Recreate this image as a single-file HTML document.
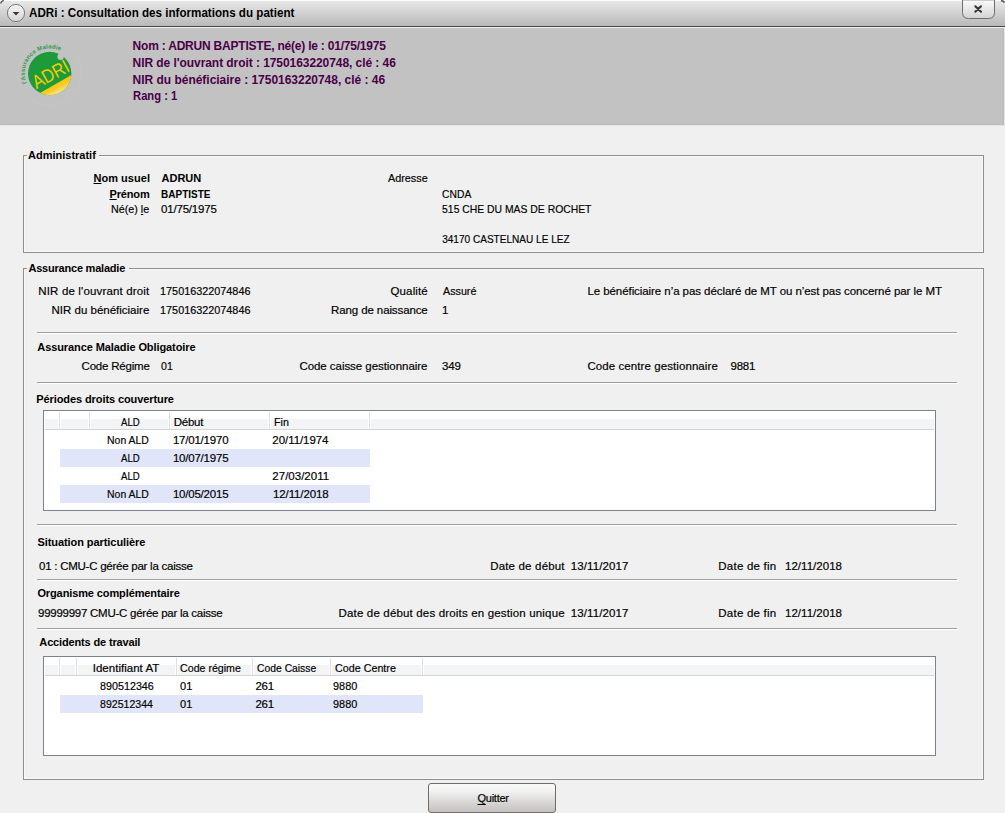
<!DOCTYPE html>
<html><head><meta charset="utf-8">
<style>
html,body{margin:0;padding:0;}
body{width:1005px;height:813px;overflow:hidden;position:relative;background:#f0f0f0;font-family:"Liberation Sans",sans-serif;}
.a{position:absolute;}
.t{position:absolute;white-space:pre;line-height:20px;font-family:"Liberation Sans",sans-serif;}
.r{-webkit-text-stroke:0.18px currentColor;}
.t u{text-decoration:underline;text-underline-offset:1px;}
.q u{text-underline-offset:2px;}
#title{position:absolute;left:0;top:0;width:1005px;height:27px;background:linear-gradient(#fbfbfb 0,#fbfbfb 1px,#e9e9ec 1px,#e6e6e6 2px,#b9b9b9 26px,#474747 26px,#474747 27px);}
#titlew{position:absolute;left:0;top:27px;width:1005px;height:1px;background:#f0f0f0;}
#hdr{position:absolute;left:0;top:28px;width:1004px;height:97px;background:#c2c2c2;box-shadow:inset -1px -1px 0 #bcbcbc, 1px 1px 1px rgba(0,0,0,0.04);}
#quit{position:absolute;left:428px;top:783px;width:126px;height:28px;border:1px solid #6f6b68;border-radius:3px;background:linear-gradient(#fafafa 0,#f0f0f0 30%,#dcdad9 60%,#c4c1bf 100%);box-sizing:content-box;}
</style></head><body>
<div id="title"></div>
<div id="titlew"></div>
<div id="hdr"></div>
<svg class="a" style="left:0;top:0" width="1005" height="28" viewBox="0 0 1005 28">
  <defs><linearGradient id="cbt" x1="0" y1="0" x2="0" y2="1"><stop offset="0" stop-color="#f4f4f4"/><stop offset="1" stop-color="#d6d6d6"/></linearGradient></defs>
  <circle cx="16" cy="13" r="8.6" fill="url(#cbt)" stroke="#7a7a7a" stroke-width="1"/>
  <path d="M12.6 12 L19.4 12 L16 15.6 Z" fill="#3a3a3a"/>
  <defs><linearGradient id="cbg" x1="0" y1="0" x2="0" y2="1"><stop offset="0" stop-color="#fbfbfb"/><stop offset="1" stop-color="#d2d2d2"/></linearGradient></defs>
  <path d="M962.5 0 L962.5 12.5 Q962.5 18.5 968.5 18.5 L988.5 18.5 Q994.5 18.5 994.5 12.5 L994.5 0" fill="url(#cbg)" stroke="#6e6e6e" stroke-width="1"/>
  <rect x="963" y="0" width="31" height="1" fill="#c9cdd2"/>
  <path d="M975.3 6.2 L981 11.8 M981 6.2 L975.3 11.8" stroke="#333" stroke-width="2" stroke-linecap="round"/>
  <path d="M0.6 3.5 Q1.2 1.2 3.8 0.4" fill="none" stroke="#5a5a5a" stroke-width="1.4"/>
  <path d="M1001 0.4 Q1003.5 1 1004.6 2.6" fill="none" stroke="#5a5a5a" stroke-width="1.6"/>
</svg>
<svg class="a" style="left:12px;top:38px" width="70" height="70" viewBox="0 0 70 70">
  <defs>
    <clipPath id="cc"><circle cx="37.7" cy="35.5" r="21.7"/></clipPath>
    <linearGradient id="yg" gradientUnits="userSpaceOnUse" x1="40" y1="42" x2="48" y2="58"><stop offset="0" stop-color="#f4c000"/><stop offset="0.5" stop-color="#f7cb22"/><stop offset="1" stop-color="#fff4d0"/></linearGradient>
    <path id="arc" d="M 14.69 45.27 A 25 25 0 0 1 47.47 12.49"/>
  </defs>
  <circle cx="37.7" cy="35.5" r="32" fill="none" stroke="#c6c6c6" stroke-width="1"/>
  <g clip-path="url(#cc)">
    <rect x="0" y="0" width="70" height="70" fill="#1d9b3b"/>
    <path d="M 10 65 L 28.4 54.7 L 59.4 37 L 70 31 L 70 70 L 0 70 Z" fill="url(#yg)"/>
  </g>
  <circle cx="48.6" cy="18.8" r="3.2" fill="#c2c2c2"/>
  <text x="0" y="0" transform="translate(24.5 51.2) rotate(-28.5) scale(0.86 1)" font-family="Liberation Sans" font-size="19" fill="#f5cc00">ADRI</text>
  <text font-family="Liberation Sans" font-size="6" font-weight="bold" fill="#2f9c47"><textPath href="#arc" textLength="60" lengthAdjust="spacing">l'Assurance Maladie</textPath></text>
</svg>
<div class='a' style='left:23px;top:155px;width:4px;height:1px;background:#8f8f8f'></div>
<div class='a' style='left:99px;top:155px;width:885px;height:1px;background:#8f8f8f'></div>
<div class='a' style='left:23px;top:155px;width:1px;height:98px;background:#8f8f8f'></div>
<div class='a' style='left:983px;top:155px;width:1px;height:98px;background:#8f8f8f'></div>
<div class='a' style='left:23px;top:252px;width:961px;height:1px;background:#8f8f8f'></div>
<div class='a' style='left:24px;top:156px;width:3px;height:1px;background:#f8f8f8'></div>
<div class='a' style='left:99px;top:156px;width:884px;height:1px;background:#f8f8f8'></div>
<div class='a' style='left:24px;top:156px;width:1px;height:96px;background:#f8f8f8'></div>
<div class='a' style='left:982px;top:156px;width:1px;height:96px;background:#f8f8f8'></div>
<div class='a' style='left:24px;top:251px;width:959px;height:1px;background:#f8f8f8'></div>
<div class='a' style='left:23px;top:268px;width:4px;height:1px;background:#8f8f8f'></div>
<div class='a' style='left:129px;top:268px;width:855px;height:1px;background:#8f8f8f'></div>
<div class='a' style='left:23px;top:268px;width:1px;height:512px;background:#8f8f8f'></div>
<div class='a' style='left:983px;top:268px;width:1px;height:512px;background:#8f8f8f'></div>
<div class='a' style='left:23px;top:779px;width:961px;height:1px;background:#8f8f8f'></div>
<div class='a' style='left:24px;top:269px;width:3px;height:1px;background:#f8f8f8'></div>
<div class='a' style='left:129px;top:269px;width:854px;height:1px;background:#f8f8f8'></div>
<div class='a' style='left:24px;top:269px;width:1px;height:510px;background:#f8f8f8'></div>
<div class='a' style='left:982px;top:269px;width:1px;height:510px;background:#f8f8f8'></div>
<div class='a' style='left:24px;top:778px;width:959px;height:1px;background:#f8f8f8'></div>
<div class='a' style='left:37px;top:332px;width:920px;height:1px;background:#a0a0a0'></div>
<div class='a' style='left:38px;top:333px;width:920px;height:1px;background:#ffffff'></div>
<div class='a' style='left:37px;top:382px;width:920px;height:1px;background:#a0a0a0'></div>
<div class='a' style='left:38px;top:383px;width:920px;height:1px;background:#ffffff'></div>
<div class='a' style='left:37px;top:524px;width:920px;height:1px;background:#a0a0a0'></div>
<div class='a' style='left:38px;top:525px;width:920px;height:1px;background:#ffffff'></div>
<div class='a' style='left:37px;top:579px;width:920px;height:1px;background:#a0a0a0'></div>
<div class='a' style='left:38px;top:580px;width:920px;height:1px;background:#ffffff'></div>
<div class='a' style='left:37px;top:628px;width:920px;height:1px;background:#a0a0a0'></div>
<div class='a' style='left:38px;top:629px;width:920px;height:1px;background:#ffffff'></div>
<div class='a' style='left:43px;top:410px;width:893px;height:101px;background:#7d838c'></div>
<div class='a' style='left:44px;top:411px;width:891px;height:99px;background:#ffffff'></div>
<div class='a' style='left:45px;top:419px;width:889px;height:10px;background:#f3f4f6'></div>
<div class='a' style='left:45px;top:429px;width:889px;height:1px;background:#d5d5d5'></div>
<div class='a' style='left:58px;top:419px;width:3px;height:10px;background:#ffffff'></div>
<div class='a' style='left:59px;top:412px;width:1px;height:17px;background:#e0e0e0'></div>
<div class='a' style='left:88px;top:419px;width:3px;height:10px;background:#ffffff'></div>
<div class='a' style='left:89px;top:412px;width:1px;height:17px;background:#e0e0e0'></div>
<div class='a' style='left:168px;top:419px;width:3px;height:10px;background:#ffffff'></div>
<div class='a' style='left:169px;top:412px;width:1px;height:17px;background:#e0e0e0'></div>
<div class='a' style='left:268px;top:419px;width:3px;height:10px;background:#ffffff'></div>
<div class='a' style='left:269px;top:412px;width:1px;height:17px;background:#e0e0e0'></div>
<div class='a' style='left:368px;top:419px;width:3px;height:10px;background:#ffffff'></div>
<div class='a' style='left:369px;top:412px;width:1px;height:17px;background:#e0e0e0'></div>
<div class='a' style='left:60px;top:449px;width:310px;height:18px;background:#e1e5fa'></div>
<div class='a' style='left:60px;top:485px;width:310px;height:18px;background:#e1e5fa'></div>
<div class='a' style='left:43px;top:656px;width:893px;height:100px;background:#7d838c'></div>
<div class='a' style='left:44px;top:657px;width:891px;height:98px;background:#ffffff'></div>
<div class='a' style='left:45px;top:665px;width:889px;height:10px;background:#f3f4f6'></div>
<div class='a' style='left:45px;top:675px;width:889px;height:1px;background:#d5d5d5'></div>
<div class='a' style='left:58px;top:665px;width:3px;height:10px;background:#ffffff'></div>
<div class='a' style='left:59px;top:658px;width:1px;height:17px;background:#e0e0e0'></div>
<div class='a' style='left:75px;top:665px;width:3px;height:10px;background:#ffffff'></div>
<div class='a' style='left:76px;top:658px;width:1px;height:17px;background:#e0e0e0'></div>
<div class='a' style='left:175px;top:665px;width:3px;height:10px;background:#ffffff'></div>
<div class='a' style='left:176px;top:658px;width:1px;height:17px;background:#e0e0e0'></div>
<div class='a' style='left:251px;top:665px;width:3px;height:10px;background:#ffffff'></div>
<div class='a' style='left:252px;top:658px;width:1px;height:17px;background:#e0e0e0'></div>
<div class='a' style='left:329px;top:665px;width:3px;height:10px;background:#ffffff'></div>
<div class='a' style='left:330px;top:658px;width:1px;height:17px;background:#e0e0e0'></div>
<div class='a' style='left:421px;top:665px;width:3px;height:10px;background:#ffffff'></div>
<div class='a' style='left:422px;top:658px;width:1px;height:17px;background:#e0e0e0'></div>
<div class='a' style='left:60px;top:695px;width:363px;height:18px;background:#e1e5fa'></div>
<div id="quit"></div>
<div class='t' style='left:29.00px;top:3px;font-size:12.5px;font-weight:bold;color:#000;letter-spacing:0px;transform-origin:0px 0;transform:scaleX(0.9298)'>ADRi : Consultation des informations du patient</div>
<div class='t' style='left:132.60px;top:36px;font-size:12px;font-weight:bold;color:#4a0048;letter-spacing:-0.214px'>Nom : ADRUN BAPTISTE, né(e) le : 01/75/1975</div>
<div class='t' style='left:132.60px;top:53px;font-size:12px;font-weight:bold;color:#4a0048;letter-spacing:-0.066px'>NIR de l'ouvrant droit : 1750163220748, clé : 46</div>
<div class='t' style='left:132.60px;top:70px;font-size:12px;font-weight:bold;color:#4a0048;letter-spacing:-0.023px'>NIR du bénéficiaire : 1750163220748, clé : 46</div>
<div class='t' style='left:132.60px;top:86px;font-size:12px;font-weight:bold;color:#4a0048;letter-spacing:0px;transform-origin:1px 0;transform:scaleX(0.9326)'>Rang : 1</div>
<div class='t' style='left:28.00px;top:145px;font-size:11px;font-weight:bold;color:#000;letter-spacing:0.0px'>Administratif</div>
<div class='t' style='left:28.50px;top:258px;font-size:11px;font-weight:bold;color:#000;letter-spacing:-0.219px'>Assurance maladie</div>
<div class='t' style='left:93.50px;top:168px;font-size:11px;font-weight:bold;color:#000;letter-spacing:0.025px'><u>N</u>om usuel</div>
<div class='t' style='left:161.60px;top:168px;font-size:11px;font-weight:bold;color:#000;letter-spacing:-0.05px'>ADRUN</div>
<div class='t' style='left:109.50px;top:184px;font-size:11px;font-weight:bold;color:#000;letter-spacing:-0.16px'><u>P</u>rénom</div>
<div class='t' style='left:160.60px;top:184px;font-size:11px;font-weight:bold;color:#000;letter-spacing:0px;transform-origin:1px 0;transform:scaleX(0.9075)'>BAPTISTE</div>
<div class='t r' style='left:111.40px;top:199px;font-size:11.5px;font-weight:normal;color:#000;letter-spacing:0px;transform-origin:1px 0;transform:scaleX(0.9325)'>Né(e) <u>l</u>e</div>
<div class='t r' style='left:161.00px;top:199px;font-size:11.5px;font-weight:normal;color:#000;letter-spacing:-0.189px'>01/75/1975</div>
<div class='t r' style='left:388.20px;top:168px;font-size:11.5px;font-weight:normal;color:#000;letter-spacing:0px;transform-origin:0px 0;transform:scaleX(0.9405)'>Adresse</div>
<div class='t r' style='left:442.40px;top:184px;font-size:11.5px;font-weight:normal;color:#000;letter-spacing:0px;transform-origin:1px 0;transform:scaleX(0.8938)'>CNDA</div>
<div class='t r' style='left:442.40px;top:199px;font-size:11.5px;font-weight:normal;color:#000;letter-spacing:0px;transform-origin:1px 0;transform:scaleX(0.9024)'>515 CHE DU MAS DE ROCHET</div>
<div class='t r' style='left:442.00px;top:229px;font-size:11.5px;font-weight:normal;color:#000;letter-spacing:0px;transform-origin:1px 0;transform:scaleX(0.8750)'>34170 CASTELNAU LE LEZ</div>
<div class='t r' style='left:38.30px;top:281px;font-size:11.5px;font-weight:normal;color:#000;letter-spacing:0.152px'>NIR de l'ouvrant droit</div>
<div class='t r' style='left:160.00px;top:281px;font-size:11.5px;font-weight:normal;color:#000;letter-spacing:0px;transform-origin:1px 0;transform:scaleX(0.9421)'>175016322074846</div>
<div class='t r' style='left:51.50px;top:300px;font-size:11.5px;font-weight:normal;color:#000;letter-spacing:0.0px'>NIR du bénéficiaire</div>
<div class='t r' style='left:160.00px;top:300px;font-size:11.5px;font-weight:normal;color:#000;letter-spacing:0px;transform-origin:1px 0;transform:scaleX(0.9421)'>175016322074846</div>
<div class='t r' style='left:390.50px;top:281px;font-size:11.5px;font-weight:normal;color:#000;letter-spacing:0.133px'>Qualité</div>
<div class='t r' style='left:443.00px;top:281px;font-size:11.5px;font-weight:normal;color:#000;letter-spacing:0px;transform-origin:0px 0;transform:scaleX(0.9333)'>Assuré</div>
<div class='t r' style='left:331.10px;top:300px;font-size:11.5px;font-weight:normal;color:#000;letter-spacing:-0.113px'>Rang de naissance</div>
<div class='t r' style='left:441.90px;top:300px;font-size:11.5px;font-weight:normal;color:#000;letter-spacing:-0.1px'>1</div>
<div class='t r' style='left:587.40px;top:281px;font-size:11.5px;font-weight:normal;color:#000;letter-spacing:-0.066px'>Le bénéficiaire n’a pas déclaré de MT ou n’est pas concerné par le MT</div>
<div class='t' style='left:37.30px;top:337px;font-size:11px;font-weight:bold;color:#000;letter-spacing:-0.089px'>Assurance Maladie Obligatoire</div>
<div class='t r' style='left:81.60px;top:356px;font-size:11.5px;font-weight:normal;color:#000;letter-spacing:-0.21px'>Code Régime</div>
<div class='t r' style='left:160.75px;top:356px;font-size:11.5px;font-weight:normal;color:#000;letter-spacing:0px;transform-origin:0px 0;transform:scaleX(0.9208)'>01</div>
<div class='t r' style='left:299.40px;top:356px;font-size:11.5px;font-weight:normal;color:#000;letter-spacing:-0.048px'>Code caisse gestionnaire</div>
<div class='t r' style='left:442.00px;top:356px;font-size:11.5px;font-weight:normal;color:#000;letter-spacing:-0.2px'>349</div>
<div class='t r' style='left:587.40px;top:356px;font-size:11.5px;font-weight:normal;color:#000;letter-spacing:0.083px'>Code centre gestionnaire</div>
<div class='t r' style='left:730.60px;top:356px;font-size:11.5px;font-weight:normal;color:#000;letter-spacing:-0.3px'>9881</div>
<div class='t' style='left:36.30px;top:389px;font-size:11px;font-weight:bold;color:#000;letter-spacing:-0.092px'>Périodes droits couverture</div>
<div class='t r' style='left:120.80px;top:412px;font-size:11.5px;font-weight:normal;color:#000;letter-spacing:0px;transform-origin:0px 0;transform:scaleX(0.8364)'>ALD</div>
<div class='t r' style='left:173.70px;top:412px;font-size:11.5px;font-weight:normal;color:#000;letter-spacing:-0.225px'>Début</div>
<div class='t r' style='left:273.70px;top:412px;font-size:11.5px;font-weight:normal;color:#000;letter-spacing:0px;transform-origin:1px 0;transform:scaleX(0.9286)'>Fin</div>
<div class='t r' style='left:107.40px;top:430px;font-size:11.5px;font-weight:normal;color:#000;letter-spacing:0px;transform-origin:1px 0;transform:scaleX(0.9067)'>Non ALD</div>
<div class='t r' style='left:172.90px;top:430px;font-size:11.5px;font-weight:normal;color:#000;letter-spacing:-0.211px'>17/01/1970</div>
<div class='t r' style='left:272.35px;top:430px;font-size:11.5px;font-weight:normal;color:#000;letter-spacing:-0.061px'>20/11/1974</div>
<div class='t r' style='left:120.80px;top:448px;font-size:11.5px;font-weight:normal;color:#000;letter-spacing:0px;transform-origin:0px 0;transform:scaleX(0.8364)'>ALD</div>
<div class='t r' style='left:172.90px;top:448px;font-size:11.5px;font-weight:normal;color:#000;letter-spacing:-0.211px'>10/07/1975</div>
<div class='t r' style='left:120.80px;top:466px;font-size:11.5px;font-weight:normal;color:#000;letter-spacing:0px;transform-origin:0px 0;transform:scaleX(0.8364)'>ALD</div>
<div class='t r' style='left:272.35px;top:466px;font-size:11.5px;font-weight:normal;color:#000;letter-spacing:0.006px'>27/03/2011</div>
<div class='t r' style='left:107.40px;top:484px;font-size:11.5px;font-weight:normal;color:#000;letter-spacing:0px;transform-origin:1px 0;transform:scaleX(0.9067)'>Non ALD</div>
<div class='t r' style='left:172.90px;top:484px;font-size:11.5px;font-weight:normal;color:#000;letter-spacing:-0.211px'>10/05/2015</div>
<div class='t r' style='left:273.10px;top:484px;font-size:11.5px;font-weight:normal;color:#000;letter-spacing:-0.133px'>12/11/2018</div>
<div class='t' style='left:37.40px;top:532px;font-size:11px;font-weight:bold;color:#000;letter-spacing:-0.067px'>Situation particulière</div>
<div class='t r' style='left:39.00px;top:556px;font-size:11.5px;font-weight:normal;color:#000;letter-spacing:-0.248px'>01 : CMU-C gérée par la caisse</div>
<div class='t r' style='left:490.20px;top:556px;font-size:11.5px;font-weight:normal;color:#000;letter-spacing:0.175px'>Date de début</div>
<div class='t r' style='left:570.80px;top:556px;font-size:11.5px;font-weight:normal;color:#000;letter-spacing:0.089px'>13/11/2017</div>
<div class='t r' style='left:718.30px;top:556px;font-size:11.5px;font-weight:normal;color:#000;letter-spacing:0.23px'>Date de fin</div>
<div class='t r' style='left:785.00px;top:556px;font-size:11.5px;font-weight:normal;color:#000;letter-spacing:0.033px'>12/11/2018</div>
<div class='t' style='left:37.40px;top:583px;font-size:11px;font-weight:bold;color:#000;letter-spacing:-0.109px'>Organisme complémentaire</div>
<div class='t r' style='left:38.00px;top:603px;font-size:11.5px;font-weight:normal;color:#000;letter-spacing:-0.255px'>99999997 CMU-C gérée par la caisse</div>
<div class='t r' style='left:338.55px;top:603px;font-size:11.5px;font-weight:normal;color:#000;letter-spacing:0.165px'>Date de début des droits en gestion unique</div>
<div class='t r' style='left:570.80px;top:603px;font-size:11.5px;font-weight:normal;color:#000;letter-spacing:0.089px'>13/11/2017</div>
<div class='t r' style='left:718.30px;top:603px;font-size:11.5px;font-weight:normal;color:#000;letter-spacing:0.23px'>Date de fin</div>
<div class='t r' style='left:785.00px;top:603px;font-size:11.5px;font-weight:normal;color:#000;letter-spacing:0.033px'>12/11/2018</div>
<div class='t' style='left:39.35px;top:632px;font-size:11px;font-weight:bold;color:#000;letter-spacing:-0.15px'>Accidents de travail</div>
<div class='t r' style='left:92.70px;top:658px;font-size:11.5px;font-weight:normal;color:#000;letter-spacing:0.023px'>Identifiant AT</div>
<div class='t r' style='left:180.20px;top:658px;font-size:11.5px;font-weight:normal;color:#000;letter-spacing:0px;transform-origin:1px 0;transform:scaleX(0.9231)'>Code régime</div>
<div class='t r' style='left:256.90px;top:658px;font-size:11.5px;font-weight:normal;color:#000;letter-spacing:0px;transform-origin:1px 0;transform:scaleX(0.8969)'>Code Caisse</div>
<div class='t r' style='left:335.00px;top:658px;font-size:11.5px;font-weight:normal;color:#000;letter-spacing:0px;transform-origin:1px 0;transform:scaleX(0.9328)'>Code Centre</div>
<div class='t r' style='left:99.70px;top:676px;font-size:11.5px;font-weight:normal;color:#000;letter-spacing:0px;transform-origin:0px 0;transform:scaleX(0.9351)'>890512346</div>
<div class='t r' style='left:180.00px;top:676px;font-size:11.5px;font-weight:normal;color:#000;letter-spacing:0px;transform-origin:0px 0;transform:scaleX(0.9583)'>01</div>
<div class='t r' style='left:255.40px;top:676px;font-size:11.5px;font-weight:normal;color:#000;letter-spacing:-0.25px'>261</div>
<div class='t r' style='left:333.30px;top:676px;font-size:11.5px;font-weight:normal;color:#000;letter-spacing:0px;transform-origin:1px 0;transform:scaleX(0.9458)'>9880</div>
<div class='t r' style='left:99.70px;top:694px;font-size:11.5px;font-weight:normal;color:#000;letter-spacing:0px;transform-origin:0px 0;transform:scaleX(0.9190)'>892512344</div>
<div class='t r' style='left:180.00px;top:694px;font-size:11.5px;font-weight:normal;color:#000;letter-spacing:0px;transform-origin:0px 0;transform:scaleX(0.9583)'>01</div>
<div class='t r' style='left:255.40px;top:694px;font-size:11.5px;font-weight:normal;color:#000;letter-spacing:-0.25px'>261</div>
<div class='t r' style='left:333.30px;top:694px;font-size:11.5px;font-weight:normal;color:#000;letter-spacing:0px;transform-origin:1px 0;transform:scaleX(0.9458)'>9880</div>
<div class='t q r' style='left:477.50px;top:788px;font-size:11px;font-weight:normal;color:#000;letter-spacing:-0.25px'><u>Q</u>uitter</div>
</body></html>
